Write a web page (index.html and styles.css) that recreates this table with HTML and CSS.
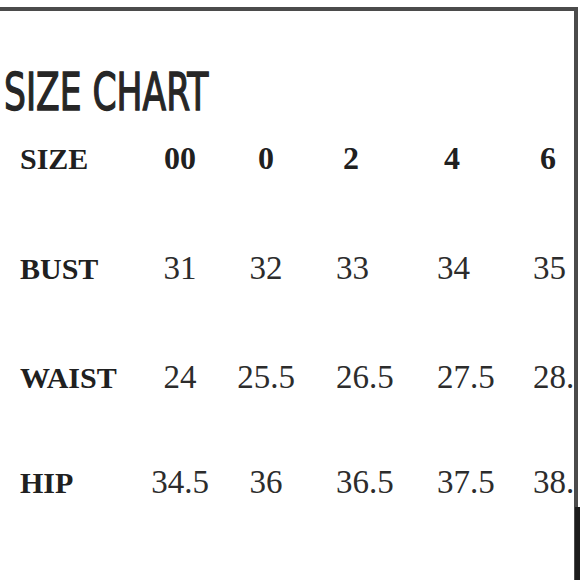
FILE: index.html
```html
<!DOCTYPE html>
<html lang="en">
<head>
<meta charset="utf-8">
<title>Size Chart</title>
<link rel="stylesheet" href="styles.css">
</head>
<body>
<div class="page">
  <div class="sheet">
    <h1 class="title">SIZE CHART</h1>
    <div class="chart">
      <div class="cell label">SIZE</div>
      <div class="cell head mid">00</div>
      <div class="cell head mid">0</div>
      <div class="cell head left">2</div>
      <div class="cell head left">4</div>
      <div class="cell head left">6</div>

      <div class="cell label">BUST</div>
      <div class="cell val mid">31</div>
      <div class="cell val mid">32</div>
      <div class="cell val left">33</div>
      <div class="cell val left">34</div>
      <div class="cell val left">35</div>

      <div class="cell label">WAIST</div>
      <div class="cell val mid">24</div>
      <div class="cell val mid">25.5</div>
      <div class="cell val left">26.5</div>
      <div class="cell val left">27.5</div>
      <div class="cell val left">28.5</div>

      <div class="cell label">HIP</div>
      <div class="cell val mid">34.5</div>
      <div class="cell val mid">36</div>
      <div class="cell val left">36.5</div>
      <div class="cell val left">37.5</div>
      <div class="cell val left">38.5</div>
    </div>
  </div>
</div>
</body>
</html>
```
FILE: styles.css
```css
html, body {
  margin: 0;
  padding: 0;
  background: #ffffff;
}

.page {
  position: relative;
  width: 580px;
  height: 580px;
  overflow: hidden;
  background: #ffffff;
}

.page::after {
  content: "";
  position: absolute;
  left: 575px;
  top: 507px;
  width: 5px;
  height: 73px;
  background: #1c1c1c;
}

.sheet {
  position: relative;
  margin-top: 7px;
  width: 574px;
  height: 573px;
  border-top: 4px solid #4b4b4b;
  border-right: 4px solid #4b4b4b;
  overflow: hidden;
}

.sheet::before {
  content: "";
  position: absolute;
  left: 221px;
  top: -4px;
  width: 4px;
  height: 4px;
  background: #151515;
}

.title {
  margin: 55px 0 0 4px;
  font-family: "Liberation Sans Narrow", "DejaVu Sans Condensed", "Liberation Sans", sans-serif;
  font-weight: normal;
  font-size: 51.5px;
  line-height: 52px;
  color: #262626;
  -webkit-text-stroke: 1.3px #262626;
  white-space: nowrap;
  transform: scaleX(0.745);
  transform-origin: left center;
  letter-spacing: 0;
}

.chart {
  display: grid;
  grid-template-columns: 120px 80px 92px 101px 96px 100px;
  grid-template-rows: 110px 109px 105px 41px;
  align-items: baseline;
  margin-top: 20px;
  padding-left: 20px;
  font-family: "Liberation Serif", "Times New Roman", serif;
  color: #2a2a2a;
}

.cell {
  line-height: 40px;
  white-space: nowrap;
}

.label {
  font-weight: bold;
  font-size: 30px;
  color: #202020;
}

.head {
  font-weight: bold;
  font-size: 32px;
  color: #202020;
}

.val {
  font-size: 33px;
  color: #2c2c2c;
}

.mid {
  text-align: center;
}

.left {
  text-align: left;
  padding-left: 24px;
}

.head.left {
  padding-left: 31px;
}
```
